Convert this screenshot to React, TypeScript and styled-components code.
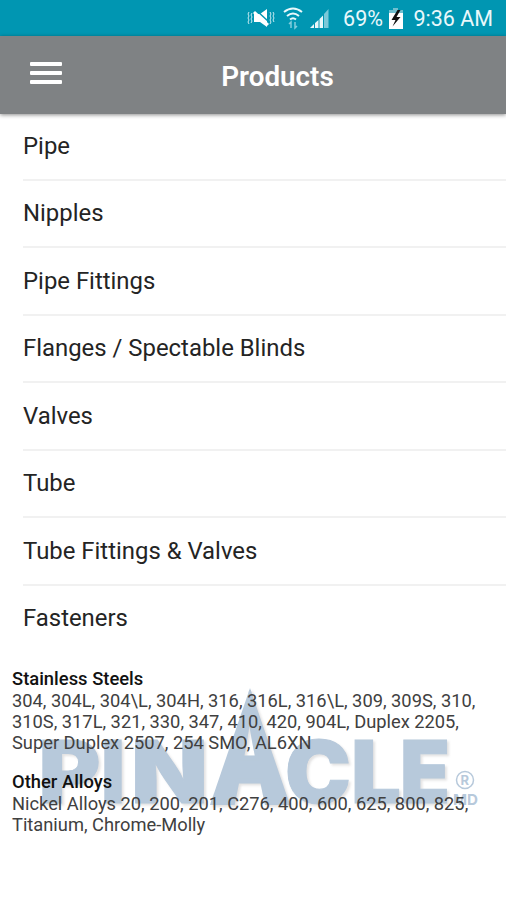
import React from "react";
import styled, { createGlobalStyle } from "styled-components";

const GlobalStyle = createGlobalStyle`
  * { box-sizing: border-box; }
  html, body { margin: 0; background: #fff; }
  body { font-family: Roboto, sans-serif; color: #242424; }
`;

const Screen = styled.div`
  display: flex;
  flex-direction: column;
  width: 506px;
  height: 900px;
  overflow: hidden;
  background: #fff;
`;

const StatusBar = styled.div`
  flex: none;
  display: flex;
  align-items: center;
  justify-content: flex-end;
  height: 36px;
  padding-right: 13px;
  background: #0096b2;
  color: #e9f8fb;
`;

const StatusText = styled.span<{ $width: number; $gap?: number }>`
  width: ${(p) => p.$width}px;
  margin-right: ${(p) => p.$gap ?? 0}px;
  font-size: 21.5px;
  line-height: 36px;
  padding-top: 2px;
  white-space: nowrap;
  text-align: right;
`;

const StatusIcon = styled.svg<{ $gap: number }>`
  flex: none;
  display: block;
  margin-right: ${(p) => p.$gap}px;
`;

const Toolbar = styled.header`
  flex: none;
  display: grid;
  grid-template-columns: 92px 1fr 45px;
  align-items: center;
  height: 78px;
  margin-bottom: -1px;
  background: #7f8284;
  box-shadow: 0 1px 4px rgba(0, 0, 0, 0.45);
`;

const MenuButton = styled.button`
  display: flex;
  flex-direction: column;
  gap: 5px;
  width: 32px;
  margin: -5px 0 0 30px;
  padding: 0;
  border: 0;
  background: none;
`;

const MenuLine = styled.span`
  height: 4px;
  border-radius: 1px;
  background: #fff;
`;

const Title = styled.h1`
  margin: 3px 0 0;
  padding-left: 2px;
  color: #fff;
  font-size: 27.8px;
  font-weight: 600;
  line-height: 32px;
  text-align: center;
`;

const ProductList = styled.ul`
  flex: none;
  list-style: none;
  margin: 0;
  padding: 0 0 0 23px;
`;

const ProductItem = styled.li`
  height: 67.5px;
  padding-top: 16.6px;
  border-bottom: 2px solid #f1f1f1;
  font-size: 23.9px;
  line-height: 32px;
  &:last-child { border-bottom-color: transparent; }
`;

const Materials = styled.section`
  position: relative;
  margin-top: 15px;
  padding-left: 12px;
`;

const Watermark = styled.svg`
  position: absolute;
  left: 0;
  top: 0;
`;

const LogoLetters = styled.g`
  filter: drop-shadow(2px 2px 1px rgba(60, 50, 50, 0.14));
`;

const Group = styled.div`
  position: relative;
  margin-bottom: 18px;
`;

const GroupTitle = styled.h2`
  margin: 0;
  color: #111;
  font-size: 18.4px;
  font-weight: 500;
  line-height: 21.5px;
`;

const Line = styled.p`
  margin: 0;
  color: #404040;
  font-size: 18.3px;
  font-weight: 400;
  line-height: 21.3px;
  white-space: nowrap;
`;

const products = ["Pipe", "Nipples", "Pipe Fittings", "Flanges / Spectable Blinds", "Valves", "Tube", "Tube Fittings & Valves", "Fasteners"];

const groups = [
  {
    title: "Stainless Steels",
    lines: [
      "304, 304L, 304\\L, 304H, 316, 316L, 316\\L, 309, 309S, 310,",
      "310S, 317L, 321, 330, 347, 410, 420, 904L, Duplex 2205,",
      "Super Duplex 2507, 254 SMO, AL6XN",
    ],
  },
  {
    title: "Other Alloys",
    lines: ["Nickel Alloys 20, 200, 201, C276, 400, 600, 625, 800, 825,", "Titanium, Chrome-Molly"],
  },
];

const letters = [
  { char: "P", x: 38.5, width: 62 },
  { char: "I", x: 101, width: 24 },
  { char: "N", x: 131, width: 77 },
  { char: "C", x: 285, width: 66 },
  { char: "L", x: 351, width: 50 },
  { char: "E", x: 400, width: 50 },
];

export default function App() {
  return (
    <Screen>
      <GlobalStyle />
      <StatusBar>
        <StatusIcon $gap={8} width="28" height="24" viewBox="0 0 28 24" fill="none" stroke="#c9ecf3">
          <path d="M7 8h6l7-5v18l-7-5H7z" fill="#fff" stroke="none" />
          <path d="M9 4l13 12" stroke="#0096b2" strokeWidth="1.5" />
          <path d="M7 6l14 13" stroke="#fff" strokeWidth="3" />
          <path d="M2 6l-1 2 1 2-1 2 1 2-1 2 1 2M5 7l-1 2 1 2-1 2 1 2-1 2M23 6l1 2-1 2 1 2-1 2 1 2-1 2M26 6l1 2-1 2 1 2-1 2 1 2" strokeWidth="1" />
        </StatusIcon>
        <StatusIcon $gap={7} width="20" height="24" viewBox="0 0 20 24" fill="none" stroke="#e9f8fb" strokeWidth="2">
          <path d="M1 6q9-7 18 0M4 10q6-5 12 0M7 13.500q3-2.500 6 0" />
          <path d="M8 22v-6l-2 2M12 16v6l2-2" stroke="#82cddd" strokeWidth="1.500" />
        </StatusIcon>
        <StatusIcon $gap={11} width="20" height="24" viewBox="0 0 20 24">
          <path d="M4 18v4H0zM8.500 14v8H5v-5zM13 9.500v12.500H9.500V13z" fill="#e8f7fa" />
          <path d="M14 8l4.500-5v19H14z" fill="#7bc8d8" />
        </StatusIcon>
        <StatusText $width={42} $gap={4}>69%</StatusText>
        <StatusIcon $gap={8} width="18" height="24" viewBox="0 0 18 24">
          <path d="M6 2h5v2h5v6H2V4h4z" fill="#70bfcf" />
          <path d="M2 7h14v16H2z" fill="#fff" />
          <path d="M10.500 4l-6 10h4l-3 6.500 8-9.500h-4l4-7z" fill="#111" />
        </StatusIcon>
        <StatusText $width={80}>9:36 AM</StatusText>
      </StatusBar>
      <Toolbar>
        <MenuButton aria-label="Menu"><MenuLine /><MenuLine /><MenuLine /></MenuButton>
        <Title>Products</Title>
      </Toolbar>
      <ProductList>
        {products.map((name) => <ProductItem key={name}>{name}</ProductItem>)}
      </ProductList>
      <Materials>
        <Watermark width="506" height="160" viewBox="0 668 506 160" fill="#b7c9db" stroke="#b7c9db" fontFamily="Inter, sans-serif" fontWeight="900">
          <defs>
            <clipPath id="peak"><path d="M250 688L290 805H210z" /></clipPath>
          </defs>
          <LogoLetters>
            {letters.map((l) => (
              <text key={l.char} x={l.x} y="803" fontSize="86" strokeWidth="1" textLength={l.width} lengthAdjust="spacingAndGlyphs">{l.char}</text>
            ))}
            <g clipPath="url(#peak)">
              <text x="207" y="803" fontSize="156" strokeWidth="5" textLength="86" lengthAdjust="spacingAndGlyphs">A</text>
            </g>
          </LogoLetters>
          <circle cx="465" cy="780" r="8.500" fill="none" strokeWidth="1.500" />
          <text x="460.500" y="785" fontSize="13" fontWeight="700" stroke="none">R</text>
          <text x="453" y="804.500" fontSize="15" fontWeight="700" stroke="none" textLength="25" lengthAdjust="spacingAndGlyphs">MD</text>
        </Watermark>
        {groups.map((g) => (
          <Group key={g.title}>
            <GroupTitle>{g.title}</GroupTitle>
            {g.lines.map((line) => <Line key={line}>{line}</Line>)}
          </Group>
        ))}
      </Materials>
    </Screen>
  );
}
